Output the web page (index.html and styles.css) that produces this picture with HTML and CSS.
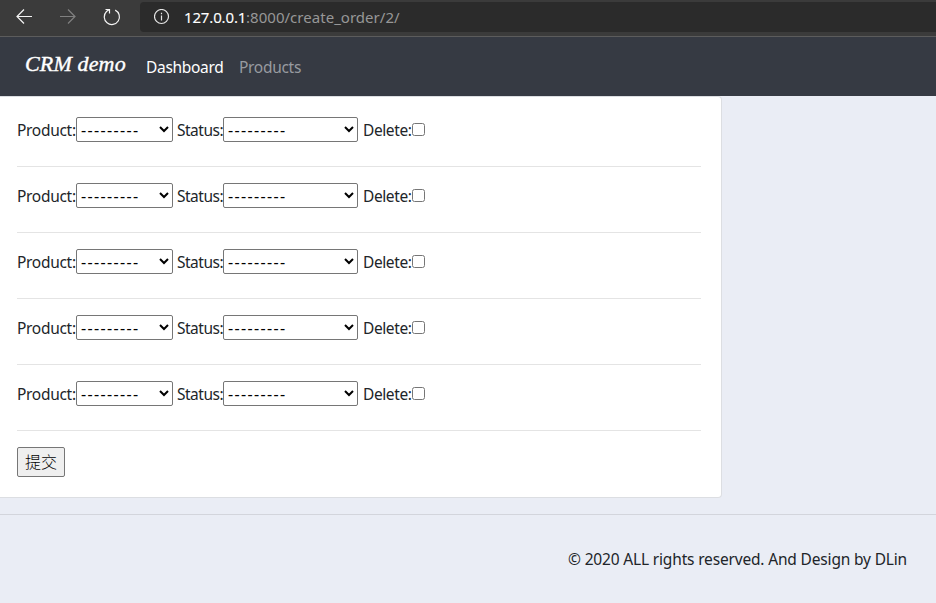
FILE: index.html
```html
<!DOCTYPE html>
<html lang="en">
<head>
<meta charset="utf-8">
<title>CRM demo</title>
<link rel="stylesheet" href="styles.css">
</head>
<body>
<div class="toolbar">
  <svg class="tools" width="140" height="36" viewBox="0 0 140 36" fill="none" stroke-width="1.2">
    <path stroke="#f4f4f4" d="M32 16.5H17M24 9.5l-7 7 7 7"/>
    <path stroke="#808080" d="M60 16.5h15M68 9.5l7 7-7 7"/>
    <path stroke="#f4f4f4" d="M115.2 10.1A7.6 7.6 0 1 1 106.5 11.5L109 9.5M105.5 9.5h4v4"/>
  </svg>
  <div class="address">
    <svg class="info" width="16" height="16" viewBox="0 0 16 16" fill="none" stroke="#e6e6e6" stroke-width="1.2">
      <circle cx="7.5" cy="7.5" r="7"/><path d="M7.5 6.5v5M7.5 3.8v1.4"/>
    </svg>
    <span class="host">127.0.0.1</span><span class="path">:8000/create_order/2/</span>
  </div>
</div>
<nav class="navbar">
  <a class="brand">CRM demo</a>
  <a class="link active">Dashboard</a>
  <a class="link products">Products</a>
</nav>
<main class="card">
  <form>
    <div class="row"><label class="product">Product:</label><select class="short"><option>---------</option></select><label class="status">Status:</label><select class="long"><option>---------</option></select><label class="delete">Delete:</label><input type="checkbox"></div>
    <div class="row"><label class="product">Product:</label><select class="short"><option>---------</option></select><label class="status">Status:</label><select class="long"><option>---------</option></select><label class="delete">Delete:</label><input type="checkbox"></div>
    <div class="row"><label class="product">Product:</label><select class="short"><option>---------</option></select><label class="status">Status:</label><select class="long"><option>---------</option></select><label class="delete">Delete:</label><input type="checkbox"></div>
    <div class="row"><label class="product">Product:</label><select class="short"><option>---------</option></select><label class="status">Status:</label><select class="long"><option>---------</option></select><label class="delete">Delete:</label><input type="checkbox"></div>
    <div class="row"><label class="product">Product:</label><select class="short"><option>---------</option></select><label class="status">Status:</label><select class="long"><option>---------</option></select><label class="delete">Delete:</label><input type="checkbox"></div>
    <button type="button">提交</button>
  </form>
</main>
<footer><span>© 2020 ALL rights reserved. And Design by DLin</span></footer>
</body>
</html>
```
FILE: styles.css
```css
* { box-sizing: border-box; }
body {
  margin: 0;
  height: 603px;
  overflow: hidden;
  background: #eaedf5;
  color: #212529;
  font: 15.5px/24px "Noto Sans", "Noto Sans CJK SC", sans-serif;
  white-space: nowrap;
}
.toolbar {
  display: flex;
  height: 37px;
  background: #3b3b3b;
  border-bottom: 1px solid #5c5c5c;
}
.tools { flex: none; }
.address {
  display: flex;
  align-items: center;
  flex: 1;
  height: 30px;
  margin-top: 2px;
  padding-left: 14px;
  background: #2b2b2b;
  border-radius: 4px 0 0 4px;
  font-size: 15px;
}
.info { margin-right: 14px; flex: none; }
.host { width: 62px; color: #fff; letter-spacing: -.15px; -webkit-text-stroke: .1px #fff; }
.path { color: #979797; letter-spacing: .03px; }
.navbar {
  display: flex;
  height: 59px;
  padding-left: 25px;
  background: #363a43;
}
.brand {
  width: 121px;
  padding-top: 15px;
  color: #fff;
  font: italic 400 22px/24px "Liberation Serif", serif;
  letter-spacing: .15px;
  -webkit-text-stroke: .4px #fff;
}
.link { padding-top: 18px; color: #989ba0; letter-spacing: -.3px; }
.active { width: 93px; color: #fff; }
.card {
  width: 722px;
  height: 402px;
  padding: 20px 20px 0 17px;
  background: #fff;
  border: 1px solid #dcdee2;
  border-left: 0;
  border-radius: 0 4px 4px 0;
}
.row {
  display: flex;
  height: 50px;
  margin-bottom: 16px;
  border-bottom: 1px solid #e4e4e4;
}
.row label { padding-top: 1px; letter-spacing: -.3px; }
.product { width: 59px; }
.status { width: 46px; margin-left: 4px; }
.row .status { letter-spacing: -.5px; }
.delete { width: 49px; margin-left: 5px; }
.row .delete { letter-spacing: -.4px; }
select {
  height: 25px;
  margin: 0;
  padding: 0;
  background-color: #fff;
  border: 1px solid #767676;
  border-radius: 2px;
  color: #000;
  font: 16px/23px "Noto Sans", sans-serif;
  letter-spacing: 1.35px;
}
.short { width: 97px; }
.long { width: 135px; }
input { width: 13px; height: 13px; margin: 6px 0 0; }
button {
  display: block;
  width: 48px;
  height: 30px;
  padding: 0 0 2px;
  background: #efefef;
  border: 1px solid #767676;
  border-radius: 2px;
  color: #000;
  font: 300 16px/24px "Noto Sans CJK SC", sans-serif;
}
footer {
  display: flex;
  justify-content: flex-end;
  height: 89px;
  margin-top: 16px;
  padding: 32px 29px 0 0;
  border-top: 1px solid #d3d5dc;
  letter-spacing: -.17px;
}
```
